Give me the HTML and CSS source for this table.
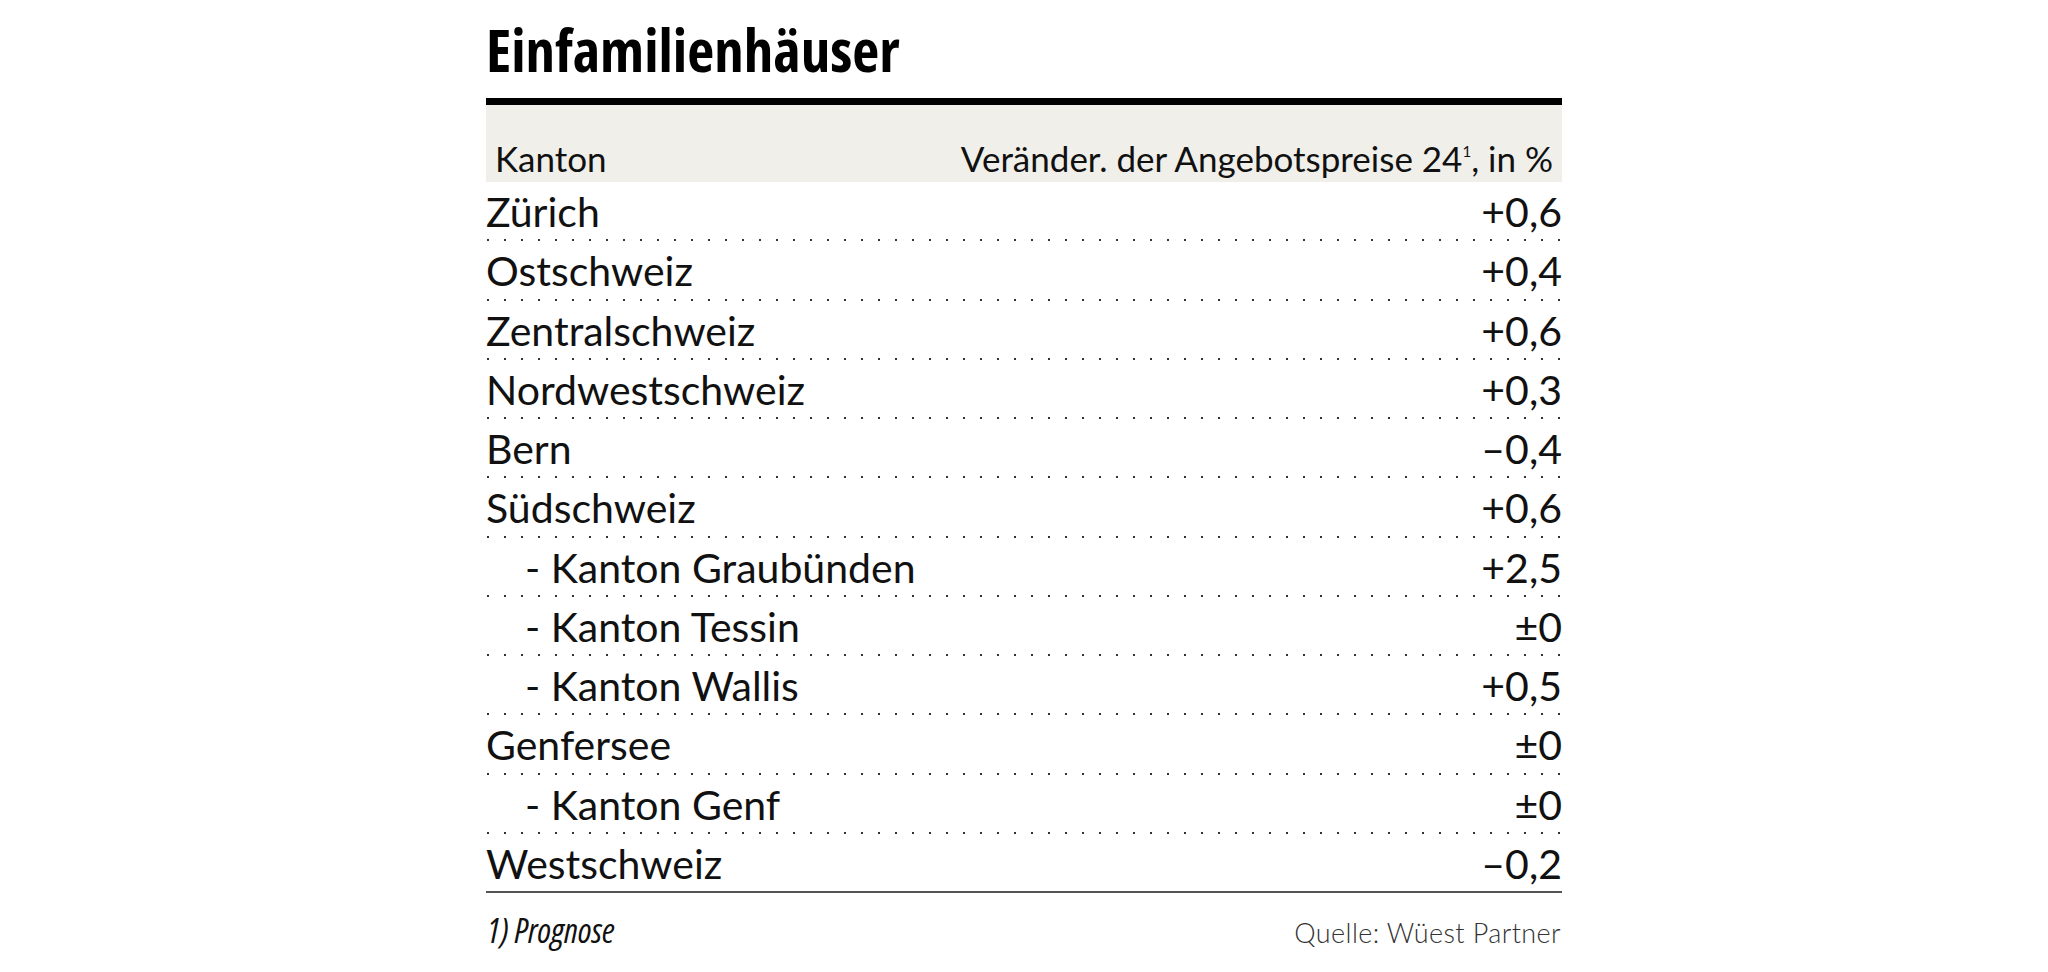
FILE: index.html
```html
<!DOCTYPE html>
<html lang="de">
<head>
<meta charset="utf-8">
<title>Einfamilienhäuser</title>
<link rel="stylesheet" href="styles.css">
</head>
<body>
<div class="chart">
  <h1 class="title">Einfamilienhäuser</h1>
  <div class="table">
    <div class="head">
      <span class="h-left">Kanton</span>
      <span class="h-right">Veränder. der Angebotspreise 24<sup>1</sup>, in %</span>
    </div>
    <div class="row"><span class="name">Zürich</span><span class="val">+0,6</span></div>
    <div class="row"><span class="name">Ostschweiz</span><span class="val">+0,4</span></div>
    <div class="row"><span class="name">Zentralschweiz</span><span class="val">+0,6</span></div>
    <div class="row"><span class="name">Nordwestschweiz</span><span class="val">+0,3</span></div>
    <div class="row"><span class="name">Bern</span><span class="val">–0,4</span></div>
    <div class="row"><span class="name">Südschweiz</span><span class="val">+0,6</span></div>
    <div class="row sub"><span class="name">- Kanton Graubünden</span><span class="val">+2,5</span></div>
    <div class="row sub"><span class="name">- Kanton Tessin</span><span class="val">±0</span></div>
    <div class="row sub"><span class="name">- Kanton Wallis</span><span class="val">+0,5</span></div>
    <div class="row"><span class="name">Genfersee</span><span class="val">±0</span></div>
    <div class="row sub"><span class="name">- Kanton Genf</span><span class="val">±0</span></div>
    <div class="row last"><span class="name">Westschweiz</span><span class="val">–0,2</span></div>
  </div>
  <div class="foot">
    <span class="note">1) Prognose</span>
    <span class="src">Quelle: Wüest Partner</span>
  </div>
</div>
</body>
</html>
```
FILE: styles.css
```css
html, body {
  margin: 0;
  padding: 0;
  background: #ffffff;
}

body {
  font-family: "Lato", "Open Sans", sans-serif;
  color: #111111;
}

.chart {
  width: 1076px;
  margin: 0 auto;
}

.title {
  margin: 0;
  padding-top: 20px;
  height: 98px;
  box-sizing: border-box;
  font-family: "Open Sans", "DejaVu Sans", sans-serif;
  font-stretch: 75%;
  font-weight: 700;
  font-size: 59px;
  line-height: 59px;
  color: #000000;
  letter-spacing: 0;
}

.table {
  border-top: 7px solid #000000;
}

.head {
  display: flex;
  justify-content: space-between;
  align-items: flex-end;
  height: 77px;
  box-sizing: border-box;
  padding: 0 9px 4px 9px;
  background: #f0efea;
  font-size: 35px;
  line-height: 40px;
  color: #111111;
}

.head sup {
  font-size: 15px;
  line-height: 0;
  vertical-align: 15px;
}

.row {
  display: flex;
  justify-content: space-between;
  height: 59.25px;
  box-sizing: border-box;
  padding-top: 3px;
  font-size: 41px;
  line-height: 54px;
  color: #111111;
  background-image: linear-gradient(to right, #333333 0, #333333 2px, transparent 2px, transparent 100%);
  background-size: 17px 2px;
  background-repeat: repeat-x;
  background-position: 1px 100%;
}

.row.sub .name {
  padding-left: 39px;
}

.row.last {
  background: none;
  border-bottom: 2px solid #555555;
}

.foot {
  display: flex;
  justify-content: space-between;
  align-items: baseline;
  padding: 17px 1px 0 1px;
}

.note {
  font-family: "Open Sans", "DejaVu Sans", sans-serif;
  font-stretch: 75%;
  font-style: italic;
  font-size: 34px;
  line-height: 40px;
  color: #111111;
}

.src {
  font-weight: 300;
  font-size: 27px;
  line-height: 40px;
  letter-spacing: 0.4px;
  color: #333333;
}
```
